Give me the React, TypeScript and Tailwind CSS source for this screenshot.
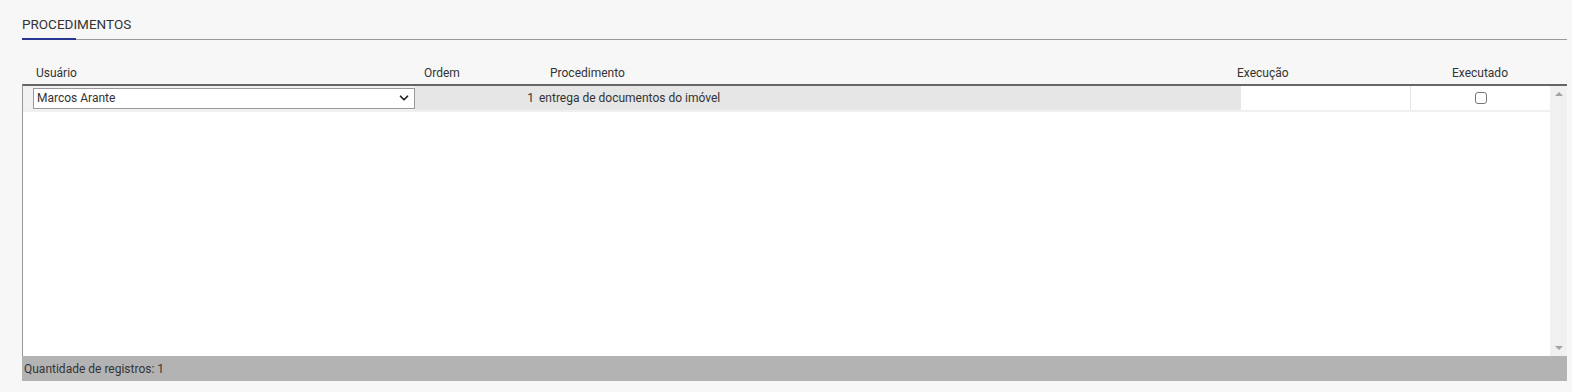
import { ChevronDown } from 'lucide-react';

const font = { fontFamily: 'Roboto, "Liberation Sans", sans-serif' };

export default function App() {
  return (
    <div className="w-full h-[392px] bg-[#f7f7f7] pl-[22px] pr-[5px] pt-[15px] text-[#333]" style={font}>
      {/* Tab title */}
      <div className="border-b border-[#999]">
        <div className="text-[13.5px] leading-[18px] h-[23px]">PROCEDIMENTOS</div>
        <div className="w-[54px] h-[2px] bg-[#283593] -mb-[1px]" />
      </div>

      {/* Column headers */}
      <div className="mt-[26px] flex text-[12px] leading-[14px] h-[18px]">
        <div className="w-[393px] pl-[14px]">Usuário</div>
        <div className="w-[126px] pl-[9px]">Ordem</div>
        <div className="w-[687px] pl-[9px]">Procedimento</div>
        <div className="w-[179px] pl-[9px]">Execução</div>
        <div className="w-[146px] text-center">Executado</div>
      </div>

      {/* Grid */}
      <div className="border-t-2 border-[#666] border-l border-l-[#999] flex h-[272px] bg-white">
        <div className="flex-1 flex flex-col">
          <div className="flex h-[26px] border-b-2 border-[#f0f0f0] text-[12px]">
            <div className="w-[392px] flex items-center bg-[#f2f2f2] pl-[10px]">
              <div className="w-[382px] h-[21px] border border-[#999] bg-white flex items-center justify-between pl-[3px] pr-[3px]">
                <span>Marcos Arante</span>
                <ChevronDown size={14} strokeWidth={3} className="text-[#222]" />
              </div>
            </div>
            <div className="w-[826px] bg-[#e6e6e6] flex items-center">
              <div className="w-[119px] text-right">1</div>
              <div className="pl-[5px]">entrega de documentos do imóvel</div>
            </div>
            <div className="w-[170px] bg-white border-r border-[#e6e6e6]" />
            <div className="flex-1 bg-white flex items-center justify-center">
              <div className="w-[12px] h-[12px] border border-[#767676] rounded-[3px] bg-white" />
            </div>
          </div>
          <div className="flex-1" />
        </div>
        {/* Scrollbar */}
        <div className="w-[17px] bg-[#f0f0f0] flex flex-col justify-between items-center py-[6px]">
          <div className="w-0 h-0 border-l-[4px] border-r-[4px] border-b-[4px] border-l-transparent border-r-transparent border-b-[#a3a3a3]" />
          <div className="w-0 h-0 border-l-[4px] border-r-[4px] border-t-[4px] border-l-transparent border-r-transparent border-t-[#a3a3a3]" />
        </div>
      </div>

      {/* Footer */}
      <div className="h-[25px] bg-[#b3b3b3] flex items-center pl-[2px] text-[12px]">
        Quantidade de registros: 1
      </div>
    </div>
  );
}
